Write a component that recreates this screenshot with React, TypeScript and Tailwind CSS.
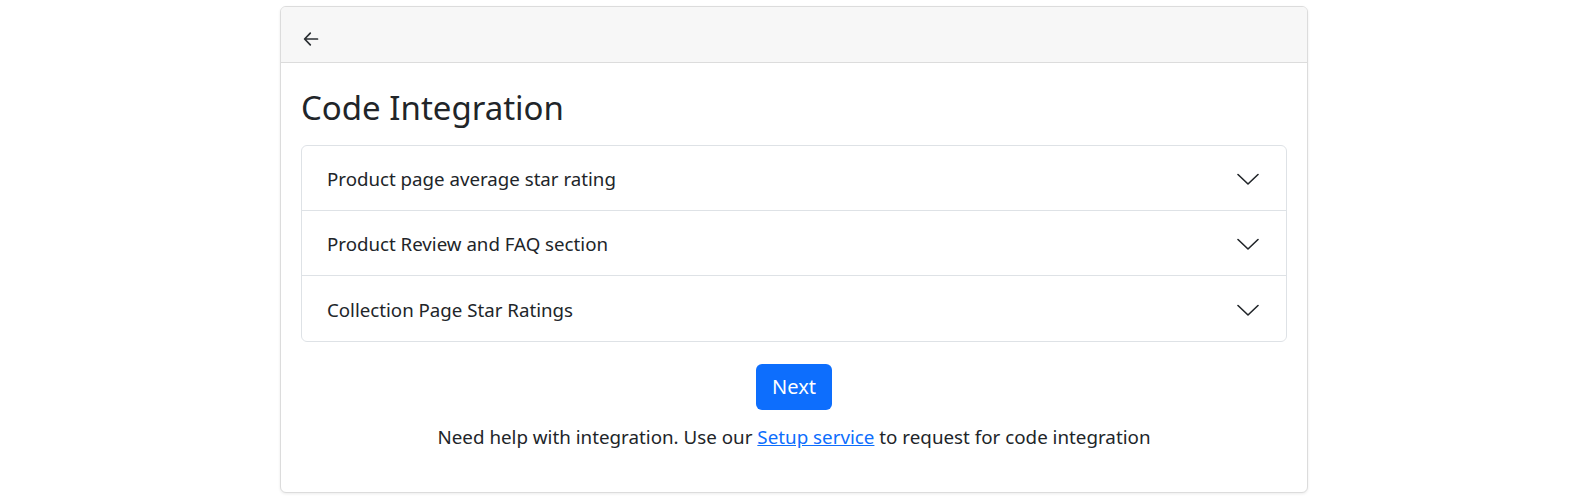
import React from 'react';

const SECTIONS = [
  'Product page average star rating',
  'Product Review and FAQ section',
  'Collection Page Star Ratings',
];

function ArrowLeft() {
  return (
    <svg width="16" height="16" viewBox="0 0 16 16" fill="none">
      <path d="M14.5 8H1.8M7.3 2.2L1.6 8L7.3 13.8" stroke="#2b2f33" strokeWidth="1.7" strokeLinecap="round" strokeLinejoin="round" />
    </svg>
  );
}

function Chevron() {
  return (
    <svg width="24" height="12" viewBox="0 0 24 12" fill="none">
      <path d="M2 1.5L12 11L22 1.5" stroke="#212529" strokeWidth="1.6" strokeLinecap="round" strokeLinejoin="round" />
    </svg>
  );
}

export default function App() {
  return (
    <div className="min-h-screen bg-white pt-[6px] text-[#212529]" style={{ fontFamily: '"Noto Sans", "Open Sans", sans-serif' }}>
      <div className="ml-[280px] w-[1028px] overflow-hidden rounded-[6px] border border-[#dcdcdc] bg-white shadow-[0_1px_3px_rgba(0,0,0,0.08)]">
        <div className="flex h-[56px] items-start border-b border-[#dcdcdc] bg-[#f7f7f7] pl-[22px] pt-[24px]">
          <ArrowLeft />
        </div>

        <div className="px-5 pb-[41px] pt-[25px]">
          <h2 className="mb-[17px] text-[33px] font-normal leading-[1.2]">Code Integration</h2>

          <div className="rounded-[6px] border border-[#dee2e6]">
            {SECTIONS.map((label, i) => (
              <div
                key={label}
                className={`flex h-[65px] items-center justify-between pl-[25px] pr-[26px] pt-[3px] ${
                  i < SECTIONS.length - 1 ? 'border-b border-[#dee2e6]' : ''
                }`}
              >
                <span className="text-[18.7px]">{label}</span>
                <Chevron />
              </div>
            ))}
          </div>

          <div className="mt-[22px] flex justify-center">
            <button className="h-[46px] rounded-[6px] bg-[#0d6efd] px-4 text-[20px] text-white">Next</button>
          </div>

          <p className="mt-[14px] text-center text-[18.8px] leading-[27px]">
            Need help with integration. Use our{' '}
            <a href="#" className="text-[#0d6efd] underline">
              Setup service
            </a>{' '}
            to request for code integration
          </p>
        </div>
      </div>
    </div>
  );
}
